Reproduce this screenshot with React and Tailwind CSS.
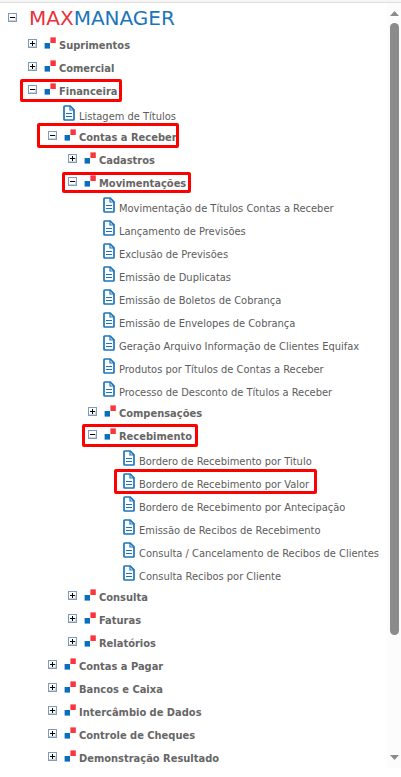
import React, { useState } from "react";

const menu = [
  { name: "Suprimentos", children: [] },
  { name: "Comercial", children: [] },
  {
    name: "Financeira",
    open: true,
    mark: "-left-2 -bottom-px h-[23px] w-[102px]",
    children: [
      { name: "Listagem de Títulos" },
      {
        name: "Contas a Receber",
        open: true,
        mark: "-left-[11px] -bottom-px h-[25px] w-[142px]",
        children: [
          { name: "Cadastros", children: [] },
          {
            name: "Movimentações",
            open: true,
            mark: "-left-[6px] bottom-0 h-[21px] w-[129px]",
            children: [
              { name: "Movimentação de Títulos Contas a Receber" },
              { name: "Lançamento de Previsões" },
              { name: "Exclusão de Previsões" },
              { name: "Emissão de Duplicatas" },
              { name: "Emissão de Boletos de Cobrança" },
              { name: "Emissão de Envelopes de Cobrança" },
              { name: "Geração Arquivo Informação de Clientes Equifax" },
              { name: "Produtos por Títulos de Contas a Receber" },
              { name: "Processo de Desconto de Títulos a Receber" },
              { name: "Compensações", children: [] },
              {
                name: "Recebimento",
                open: true,
                mark: "-left-[6px] -bottom-px h-[23px] w-[116px]",
                children: [
                  { name: "Bordero de Recebimento por Titulo" },
                  {
                    name: "Bordero de Recebimento por Valor",
                    mark: "left-1.5 -bottom-0.5 h-[25px] w-[203px]",
                  },
                  { name: "Bordero de Recebimento por Antecipação" },
                  { name: "Emissão de Recibos de Recebimento" },
                  { name: "Consulta / Cancelamento de Recibos de Clientes" },
                  { name: "Consulta Recibos por Cliente" },
                ],
              },
            ],
          },
          { name: "Consulta", children: [] },
          { name: "Faturas", children: [] },
          { name: "Relatórios", children: [] },
        ],
      },
      { name: "Contas a Pagar", children: [] },
      { name: "Bancos e Caixa", children: [] },
      { name: "Intercâmbio de Dados", children: [] },
      { name: "Controle de Cheques", children: [] },
      { name: "Demonstração Resultado", children: [] },
    ],
  },
];

const Toggle = ({ open, onClick, label }) => (
  <button
    onClick={onClick}
    aria-expanded={open}
    aria-label={label}
    className="size-[9px] shrink-0 cursor-pointer"
  >
    <svg viewBox="0 0 9 9" className="block size-[9px]" shapeRendering="crispEdges">
      <rect width="9" height="9" fill="#7a9cc4" />
      <rect x="1" y="1" width="7" height="7" fill="#fff" />
      <path d="M1 7h7v1H1zM7 4h1v4H7z" fill="#d5d2cb" />
      <rect x="2" y="4" width="5" height="1" fill="#000" />
      {!open && <rect x="4" y="2" width="1" height="5" fill="#000" />}
    </svg>
  </button>
);

const FolderIcon = () => (
  <svg viewBox="0 0 12 12" className="mb-0.5 ml-[7px] size-3 shrink-0">
    <rect x="0.6" y="6" width="5.4" height="5.6" fill="#0a6ebd" />
    <rect x="6.4" y="0.4" width="5.4" height="5.6" fill="#fb343d" />
  </svg>
);

const DocIcon = () => (
  <svg viewBox="0 0 12 16" className="h-4 w-3 shrink-0" fill="none" stroke="#1b75bb">
    <path
      d="M1.7 1H7.2L11 4.8V14.3Q11 15 10.3 15H1.7Q1 15 1 14.3V1.7Q1 1 1.7 1Z"
      strokeWidth="1.7"
    />
    <path d="M7 1V5H11" strokeWidth="1.2" />
    <path d="M3 8.5H9M3 11.5H9" strokeWidth="1.2" />
  </svg>
);

const Node = ({ item }) => {
  const [open, setOpen] = useState(Boolean(item.open));

  return (
    <li>
      <div className="relative flex h-[23px] items-center">
        {item.children ? (
          <>
            <Toggle open={open} onClick={() => setOpen(!open)} label={item.name} />
            <FolderIcon />
            <span className="ml-[3px] pt-1 font-bold whitespace-nowrap text-[#666]">
              {item.name}
            </span>
          </>
        ) : (
          <a href="#" className="ml-[15px] flex items-center gap-1 whitespace-nowrap">
            <DocIcon />
            <span className="pt-2">{item.name}</span>
          </a>
        )}
        {item.mark && (
          <span
            className={`pointer-events-none absolute rounded-xs border-3 border-[#fe0000] ${item.mark}`}
          />
        )}
      </div>
      {open && item.children?.length > 0 && (
        <ul className="pl-5">
          {item.children.map((child) => (
            <Node key={child.name} item={child} />
          ))}
        </ul>
      )}
    </li>
  );
};

const ScrollRail = () => (
  <div className="flex w-3.5 shrink-0 flex-col items-center bg-[#fcfcfc] py-2">
    <svg viewBox="0 0 9 5" className="h-[5px] w-[9px]">
      <path d="M4.5 0L9 5H0Z" fill="#8b8b8b" />
    </svg>
    <div className="mt-[7px] w-[9px] grow-184 basis-0 rounded-full bg-[#8b8b8b]" />
    <div className="grow-36 basis-0" />
    <svg viewBox="0 0 9 5" className="h-[5px] w-[9px]">
      <path d="M0 0H9L4.5 5Z" fill="#8b8b8b" />
    </svg>
  </div>
);

const App = () => {
  const [open, setOpen] = useState(true);

  return (
    <div className="bg-white font-['DejaVu_Sans_Condensed','DejaVu_Sans',sans-serif] text-[11px] leading-4 text-[#5c5c5c]">
      <div className="h-[3px] border-b border-[#dedede] bg-[#f5f5f5]" />
      <div className="flex">
        <nav className="min-w-0 flex-1 overflow-hidden pl-2">
          <div className="flex h-[29px] items-center">
            <Toggle open={open} onClick={() => setOpen(!open)} label="MaxManager" />
            <h1 className="ml-3 font-['DejaVu_Sans',sans-serif] text-xl leading-6 text-[#1b75bb]">
              <span className="text-[#e8323c]">MAX</span>MANAGER
            </h1>
          </div>
          {open && (
            <ul className="pl-5">
              {menu.map((item) => (
                <Node key={item.name} item={item} />
              ))}
            </ul>
          )}
        </nav>
        <ScrollRail />
      </div>
    </div>
  );
};

export default App;
